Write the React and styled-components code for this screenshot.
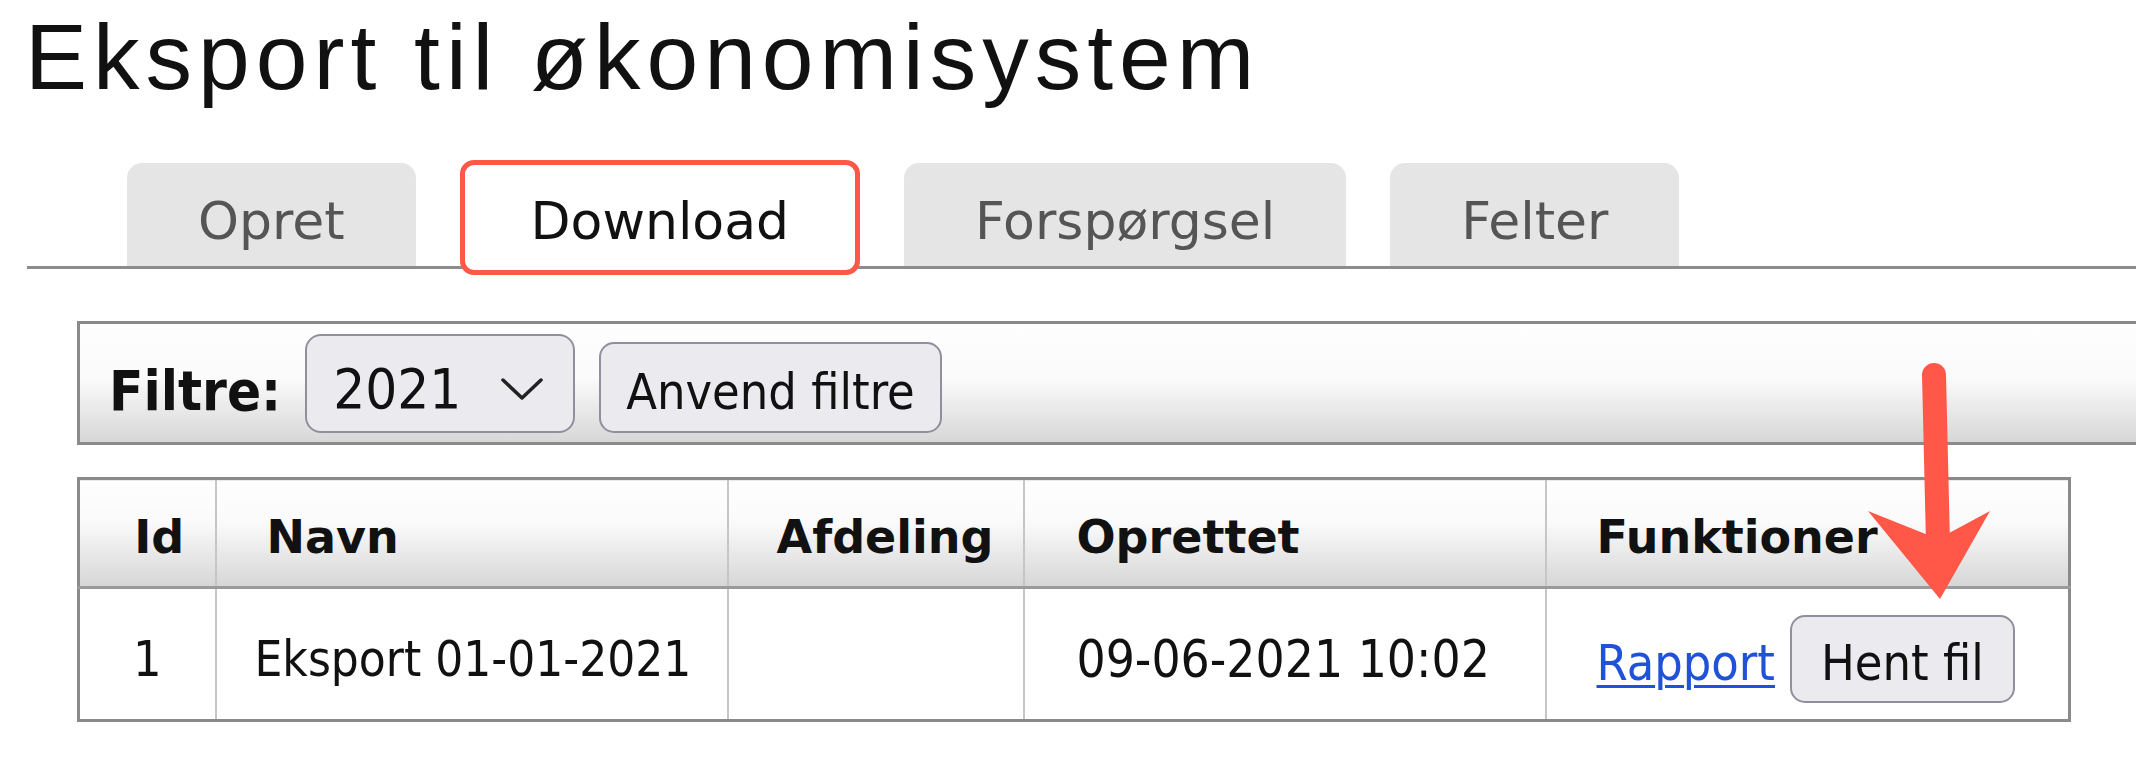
import React from "react";
import styled, { createGlobalStyle } from "styled-components";

const GlobalStyle = createGlobalStyle`
  body {
    margin: 0;
    background: #fff;
    overflow: hidden;
  }
`;

const RED = "#ff5848";
const NARROW = `"DejaVu Sans Condensed", "DejaVu Sans", sans-serif`;

const Page = styled.div`
  position: relative;
  padding-left: 27px;
  width: 2136px;
  height: 770px;
  box-sizing: border-box;
`;

const Title = styled.h1`
  margin: 11px 0 0 -2px;
  font-family: "Liberation Sans", Arial, sans-serif;
  font-weight: normal;
  font-size: 93px;
  line-height: 93px;
  letter-spacing: 6px;
  color: #111;
`;

const TabBar = styled.div`
  display: flex;
  align-items: flex-end;
  gap: 44px;
  margin-top: 56px;
  padding-left: 100px;
  border-bottom: 3px solid #8c8c8c;
`;

const Tab = styled.div`
  position: relative;
  box-sizing: border-box;
  height: ${(p) => (p.$active ? "115px" : "103px")};
  padding: ${(p) => (p.$active ? "12px 66px 0" : "14px 71px 0")};
  margin-bottom: ${(p) => (p.$active ? "-9px" : "0")};
  background: ${(p) => (p.$active ? "#fff" : "#e5e5e5")};
  border: ${(p) => (p.$active ? `5px solid ${RED}` : "none")};
  border-radius: ${(p) => (p.$active ? "14px" : "15px 15px 0 0")};
  font-family: "DejaVu Sans", Verdana, sans-serif;
  font-size: 52px;
  line-height: 89px;
  color: ${(p) => (p.$active ? "#111" : "#555")};
  white-space: nowrap;
`;

const Content = styled.div`
  margin-left: 50px;
`;

const FilterBar = styled.div`
  display: flex;
  align-items: flex-end;
  gap: 24px;
  box-sizing: border-box;
  height: 124px;
  margin-top: 52px;
  padding: 0 0 9px 29px;
  border: 3px solid #8a8a8a;
  border-right: none;
  background: linear-gradient(#fefefe 0%, #fbfbfb 45%, #d7d7d7 100%);
`;

const FilterLabel = styled.span`
  font-family: ${NARROW};
  font-stretch: condensed;
  font-weight: bold;
  font-size: 56px;
  line-height: 64px;
  margin-bottom: 10px;
  color: #111;
`;

const Select = styled.div`
  display: flex;
  align-items: flex-start;
  box-sizing: border-box;
  width: 270px;
  height: 99px;
  padding: 21px 0 0 26px;
  border: 2px solid #8f8f9d;
  border-radius: 16px;
  background: #ebebef;
  font-family: ${NARROW};
  font-stretch: condensed;
  font-size: 56px;
  color: #111;
`;

const SelectValue = styled.span`
  line-height: 64px;
  flex: 1;
`;

const Chevron = styled.svg`
  margin: 20px 29px 0 0;
`;

const Button = styled.button`
  display: inline-flex;
  align-items: center;
  box-sizing: border-box;
  height: ${(p) => p.$h}px;
  padding: 8px ${(p) => p.$px}px 0;
  border: 2px solid #8f8f9d;
  border-radius: 15px;
  background: #ebebef;
  font-family: ${NARROW};
  font-stretch: condensed;
  font-size: 50px;
  color: #111;
  white-space: nowrap;
`;

const Table = styled.table`
  margin-top: 32px;
  width: 1991px;
  table-layout: fixed;
  border-collapse: collapse;
  border: 3px solid #8a8a8a;
`;

const Th = styled.th`
  height: 98px;
  padding: 8px ${(p) => p.$pr || 0}px 0 ${(p) => p.$pl || 0}px;
  text-align: ${(p) => p.$align || "left"};
  border-left: 2px solid #c6c6c6;
  border-bottom: 3px solid #9a9a9a;
  background: linear-gradient(#fefefe 0%, #fafafa 40%, #d6d6d6 100%);
  font-family: "DejaVu Sans", Verdana, sans-serif;
  font-weight: bold;
  font-size: 46px;
  color: #111;
  white-space: nowrap;
`;

const Td = styled.td`
  height: 120px;
  padding: 10px 0 0 ${(p) => p.$pl || 0}px;
  text-align: ${(p) => p.$align || "left"};
  border-left: 2px solid #c6c6c6;
  font-family: ${NARROW};
  font-stretch: condensed;
  font-size: ${(p) => p.$fs || 50}px;
  color: #111;
  white-space: nowrap;
`;

const Actions = styled.div`
  display: flex;
  align-items: baseline;
  gap: 15px;
`;

const Link = styled.a`
  color: #1f52d8;
  text-decoration: underline;
  text-decoration-thickness: 3px;
  text-underline-offset: 5px;
`;

const ArrowOverlay = styled.svg`
  position: absolute;
  left: 1860px;
  top: 350px;
`;

const tabs = ["Opret", "Download", "Forspørgsel", "Felter"];

export default function App() {
  return (
    <Page>
      <GlobalStyle />
      <Title>Eksport til økonomisystem</Title>
      <TabBar>
        {tabs.map((t) => (
          <Tab key={t} $active={t === "Download"}>
            {t}
          </Tab>
        ))}
      </TabBar>
      <Content>
        <FilterBar>
          <FilterLabel>Filtre:</FilterLabel>
          <Select>
            <SelectValue>2021</SelectValue>
            <Chevron width="44" height="24" viewBox="0 0 44 24">
              <polyline
                points="3,3 22,21 41,3"
                fill="none"
                stroke="#222"
                strokeWidth="3.5"
                strokeLinecap="round"
                strokeLinejoin="round"
              />
            </Chevron>
          </Select>
          <Button $h={91} $px={25}>Anvend filtre</Button>
        </FilterBar>
        <Table>
          <colgroup>
            <col style={{ width: 137 }} />
            <col style={{ width: 512 }} />
            <col style={{ width: 296 }} />
            <col style={{ width: 522 }} />
            <col style={{ width: 524 }} />
          </colgroup>
          <thead>
            <tr>
              <Th $align="center" $pl={24}>Id</Th>
              <Th $pl={50}>Navn</Th>
              <Th $align="right" $pr={29}>Afdeling</Th>
              <Th $pl={52}>Oprettet</Th>
              <Th $pl={50}>Funktioner</Th>
            </tr>
          </thead>
          <tbody>
            <tr>
              <Td $align="center">1</Td>
              <Td $pl={38} $fs={49}>Eksport 01-01-2021</Td>
              <Td />
              <Td $pl={52} $fs={51}>09-06-2021 10:02</Td>
              <Td $pl={50}>
                <Actions>
                  <Link href="#">Rapport</Link>
                  <Button $h={88} $px={29}>Hent fil</Button>
                </Actions>
              </Td>
            </tr>
          </tbody>
        </Table>
      </Content>
      <ArrowOverlay width="140" height="250" viewBox="0 0 140 250">
        <line
          x1="74"
          y1="14"
          x2="78"
          y2="182"
          stroke={RED}
          strokeWidth="24"
          strokeLinecap="round"
        />
        <polygon points="80,238 8,150 78,178 130,150" fill={RED} />
      </ArrowOverlay>
    </Page>
  );
}
